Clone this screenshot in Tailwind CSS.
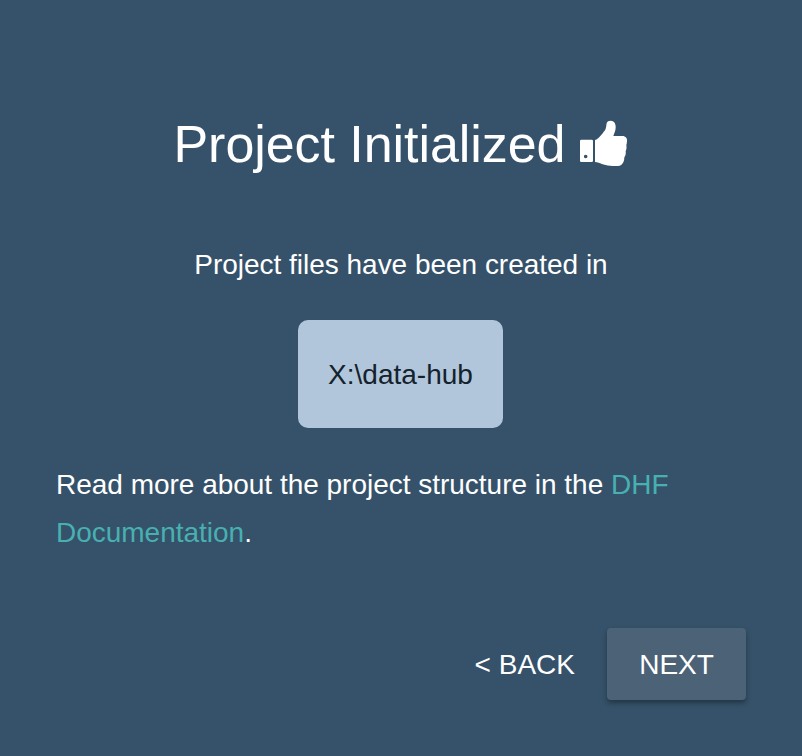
<!DOCTYPE html>
<html lang="en"><head><meta charset="utf-8"><title>Project Initialized</title>
<script src="https://cdn.jsdelivr.net/npm/@tailwindcss/browser@4"></script></head>
<body class="bg-[#35526a]">
<main class="flex h-[756px] w-[802px] flex-col px-14 pt-[114px] font-['Liberation_Sans',Arial,sans-serif] text-[28px] leading-[48px] text-white">
<h1 class="flex items-center pl-[117.500px] text-[52px] leading-[60px] tracking-[-0.060px]"><span class="w-[405.500px]">Project Initialized</span>
<svg class="h-12 w-[49px]" viewBox="57 45 147 144" fill="currentColor" aria-hidden="true"><path fill-rule="evenodd" d="M64 104H95Q99 104 99 108V167Q99 171 95 171H64Q60 171 60 167V108Q60 104 64 104ZM77 149a5.500 5.500 0 1 0 0 11a5.500 5.500 0 0 0 0-11Z"/><path d="M105 105C112 104 115 99 121 93C127 87 130 81 134 77C139 72 138 62 140 55C143 46 154 46 161 50C168 56 169 70 164 82L160 93H187C197 93 202 100 201 108C201 113 200 117 199 120C200 126 200 133 197 138C198 145 197 152 193 157C193 166 191 172 187 176C183 182 176 183 168 183C142 183 128 178 116 173Q111 171 105 171Z"/></svg></h1>
<p class="mt-[67px] text-center tracking-[-0.020px]">Project files have been created in</p>
<div class="mt-[31px] mr-px flex h-[108px] w-[205px] items-center justify-center self-center rounded-[10px] bg-[#b1c6da] pt-0.5 text-[#14222d]">X:\data-hub</div>
<p class="mt-[33px] tracking-[-0.015px]">Read more about the project structure in the <a class="text-[#48b0b0]">DHF Documentation</a>.</p>
<div class="mt-[71px] flex h-[72px] justify-end"><button class="px-8 pt-0.5">&lt; BACK</button><button class="w-[139px] rounded bg-[#4b6277] pt-0.5 shadow-[0_3px_5px_rgba(0,0,0,0.35)]">NEXT</button></div>
</main></body></html>
